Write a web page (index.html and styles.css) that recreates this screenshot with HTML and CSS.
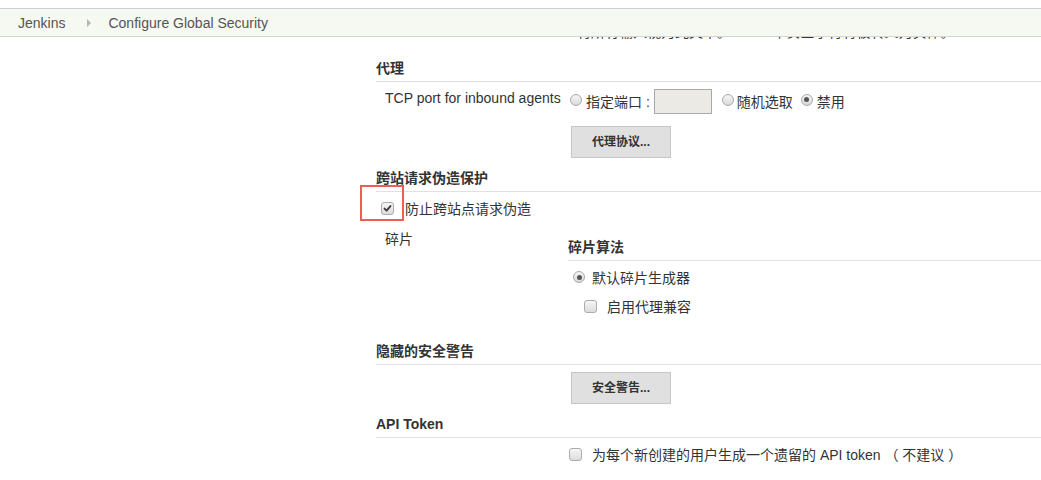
FILE: index.html
```html
<!DOCTYPE html>
<html lang="zh-CN">
<head>
<meta charset="utf-8">
<title>Configure Global Security [Jenkins]</title>
<link rel="stylesheet" href="styles.css">
</head>
<body>
<div class="breadcrumb">
  <span class="crumb">Jenkins</span>
  <span class="crumb-sep"></span>
  <span class="crumb">Configure Global Security</span>
</div>
<div class="layout">
  <div class="side"></div>
  <div class="main">
    <div class="cut"><div class="cut-text">将所有输入视为纯文本。HTML 不安全字符将被转义为实体。</div></div>

    <div class="section-header h-agents">代理</div>
    <div class="row tcp-row">
      <div class="label tcp-label">TCP port for inbound agents</div>
      <div class="setting tcp-setting">
        <span class="radio r-fixed"></span><span class="opt-text">指定端口 :</span>
        <span class="port-input"></span>
        <span class="radio r-random"></span><span class="opt-text">随机选取</span>
        <span class="radio checked r-disable"></span><span class="opt-text">禁用</span>
      </div>
    </div>
    <div class="row btn-row btn-row-first">
      <div class="label"></div>
      <div class="setting"><span class="btn">代理协议...</span></div>
    </div>

    <div class="section-header h-gap">跨站请求伪造保护</div>
    <div class="check-row csrf-row">
      <span class="checkbox checked csrf-box"><svg viewBox="0 0 13 13" width="13" height="13"><path d="M3 6.6 L5.4 9 L10 3.6" fill="none" stroke="#3a3a3a" stroke-width="2.2" stroke-linecap="round" stroke-linejoin="round"/></svg></span>
      <span class="csrf-text">防止跨站点请求伪造</span>
      <div class="highlight"></div>
    </div>
    <div class="row crumb-row">
      <div class="label crumb-label">碎片</div>
      <div class="setting">
        <div class="sub-header">碎片算法</div>
        <div class="opt-line issuer-line">
          <span class="radio checked r-issuer"></span><span>默认碎片生成器</span>
        </div>
        <div class="opt-line proxy-line">
          <span class="checkbox proxy-box"></span><span>启用代理兼容</span>
        </div>
      </div>
    </div>

    <div class="section-header h-hidden">隐藏的安全警告</div>
    <div class="row btn-row">
      <div class="label"></div>
      <div class="setting"><span class="btn">安全警告...</span></div>
    </div>

    <div class="section-header h-gap">API Token</div>
    <div class="row token-row">
      <div class="label"></div>
      <div class="setting opt-line">
        <span class="checkbox token-box"></span><span>为每个新创建的用户生成一个遗留的 API token （ 不建议 ）</span>
      </div>
    </div>
  </div>
</div>
</body>
</html>
```

FILE: styles.css
```css
* {
  box-sizing: border-box;
}

html,
body {
  margin: 0;
  padding: 0;
  background: #ffffff;
}

body {
  padding-top: 8px;
  font-family: "Liberation Sans", "Noto Sans CJK SC", sans-serif;
  font-size: 14px;
  line-height: 20px;
  color: #333333;
}

/* breadcrumb bar */
.breadcrumb {
  height: 29px;
  display: flex;
  align-items: center;
  padding-left: 18px;
  background: #f6f8f2;
  border-top: 1px solid #cdcddb;
  border-bottom: 1px solid #d3d7cf;
  color: #555555;
}

.crumb-sep {
  width: 0;
  height: 0;
  border-left: 4px solid #b4b4b4;
  border-top: 4px solid transparent;
  border-bottom: 4px solid transparent;
  margin: 0 17px 0 22px;
}

/* page layout */
.layout {
  display: flex;
}

.side {
  width: 376px;
  flex: none;
}

.main {
  flex: 1;
  min-width: 0;
}

.cut {
  height: 3px;
  overflow: hidden;
  padding-left: 201px;
}

.cut-text {
  margin-top: -15px;
  white-space: nowrap;
}

.section-header {
  font-weight: bold;
  line-height: 20px;
  padding-bottom: 3px;
  border-bottom: 1px solid #e1e1e1;
}

.h-agents {
  margin-top: 18px;
}

.h-gap {
  margin-top: 10px;
}

.h-hidden {
  margin-top: 24px;
}

.row {
  display: flex;
}

.label {
  width: 192px;
  flex: none;
  padding-left: 9px;
}

.setting {
  flex: 1;
  min-width: 0;
}

/* TCP row */
.tcp-label {
  padding-top: 6px;
}

.tcp-setting {
  margin-top: 7px;
  height: 25px;
  display: flex;
  align-items: center;
  white-space: nowrap;
}

.radio {
  width: 12px;
  height: 12px;
  flex: none;
  border-radius: 50%;
  border: 1px solid #a9a9a9;
  background: linear-gradient(#f6f6f6, #d9d9d9);
  display: inline-flex;
  align-items: center;
  justify-content: center;
}

.radio.checked::after {
  content: "";
  width: 5px;
  height: 5px;
  border-radius: 50%;
  background: #555555;
}

.tcp-setting .radio {
  margin-bottom: 4px;
}

.r-fixed {
  margin-left: 2px;
  margin-right: 4px;
}

.r-random {
  margin-left: 10px;
  margin-right: 3px;
}

.r-disable {
  margin-left: 8px;
  margin-right: 4px;
}

.port-input {
  width: 58px;
  height: 25px;
  margin-left: 4px;
  background: #ebeae4;
  border: 1px solid #a9a9a9;
}

/* buttons */
.btn-row {
  margin-top: 7px;
}

.btn-row-first {
  margin-top: 12px;
}

.btn {
  display: flex;
  align-items: center;
  justify-content: center;
  width: 100px;
  height: 32px;
  margin-left: 3px;
  background: #e0e0e0;
  border: 1px solid #c6c6c6;
  font-size: 12px;
  font-weight: bold;
  color: #333333;
}

/* checkboxes */
.checkbox {
  width: 13px;
  height: 13px;
  flex: none;
  border: 1px solid #acacac;
  border-radius: 3px;
  background: linear-gradient(#f6f6f6, #dcdcdc);
  display: inline-flex;
  align-items: center;
  justify-content: center;
}

.checkbox svg {
  display: block;
}

.check-row {
  position: relative;
  display: flex;
  align-items: center;
  margin-top: 7px;
  height: 20px;
}

.csrf-box {
  margin-left: 5px;
  margin-right: 11px;
  margin-bottom: 2px;
}

.highlight {
  position: absolute;
  left: -16px;
  top: -14px;
  width: 44px;
  height: 36px;
  border: 2px solid #ec5f57;
}

/* crumb section */
.crumb-label {
  padding-top: 10px;
}

.sub-header {
  margin-top: 18px;
  font-weight: bold;
  line-height: 20px;
  padding-bottom: 3px;
  border-bottom: 1px solid #e1e1e1;
}

.opt-line {
  display: flex;
  align-items: center;
  height: 20px;
  white-space: nowrap;
}

.issuer-line {
  margin-top: 7px;
}

.r-issuer {
  margin-left: 5px;
  margin-right: 7px;
  margin-bottom: 2px;
}

.proxy-line {
  margin-top: 9px;
}

.proxy-box {
  margin-left: 16px;
  margin-right: 10px;
  margin-bottom: 2px;
}

/* api token */
.token-row {
  margin-top: 7px;
}

.token-box {
  margin-left: 1px;
  margin-right: 10px;
  margin-bottom: 1px;
}
```
